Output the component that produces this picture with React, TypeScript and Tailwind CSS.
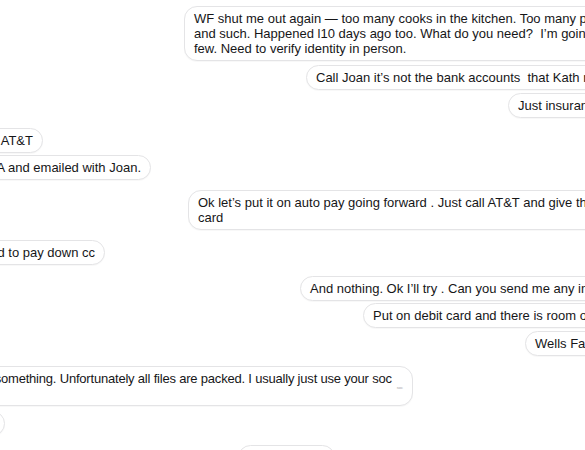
type Msg = {
  side: "in" | "out";
  lines: string[];
  mt: string;
  pos: string;
  tail?: boolean;
  tight?: boolean;
};

const messages: Msg[] = [
  {
    side: "out",
    mt: "mt-[6px]",
    pos: "ml-[184px]",
    lines: [
      "WF shut me out again \u2014 too many cooks in the kitchen. Too many profiles",
      "and such. Happened l10 days ago too. What do you need?\u00a0 I\u2019m going to go to a branch in a",
      "few. Need to verify identity in person.",
    ],
  },
  { side: "out", mt: "mt-[4px]", pos: "ml-[306px]", lines: ["Call Joan it\u2019s not the bank accounts\u00a0 that Kath needs"] },
  { side: "out", mt: "mt-[3px]", pos: "ml-[508px]", lines: ["Just insurance"] },
  { side: "in", mt: "mt-[10px]", pos: "w-[43px]", lines: ["Paid by\u00a0 AT&T"] },
  { side: "in", mt: "mt-[2px]", pos: "w-[151px]", lines: ["I called SSA and emailed with Joan."] },
  {
    side: "out",
    mt: "mt-[10px]",
    pos: "ml-[188px]",
    lines: ["Ok let\u2019s put it on auto pay going forward . Just call AT&T and give them the", "card"],
  },
  { side: "in", mt: "mt-[10px]", pos: "w-[105px]", lines: ["I need to pay down cc"] },
  { side: "out", mt: "mt-[11px]", pos: "ml-[300px]", lines: ["And nothing. Ok I\u2019ll try . Can you send me any info"] },
  { side: "out", mt: "mt-[2px]", pos: "ml-[363px]", lines: ["Put on debit card and there is room on it"] },
  { side: "out", mt: "mt-[3px]", pos: "ml-[525px]", lines: ["Wells Fargo"] },
  {
    side: "in",
    mt: "mt-[10px]",
    pos: "w-[413px]",
    tail: true,
    tight: true,
    lines: ["Send me something. Unfortunately all files are packed. I usually just use your soc", "\u00a0"],
  },
  { side: "in", mt: "mt-[5px]", pos: "w-[5px]", lines: ["Ok"] },
  { side: "out", mt: "mt-[9px]", pos: "ml-[238px]", lines: ["Sounds good"] },
];

function Bubble({ msg }: { msg: Msg }) {
  return (
    <div
      className={`shrink-0 whitespace-nowrap rounded-[13px] border border-[#e4e4e6] bg-white px-[9px] py-[4px] text-[13px] leading-[15px] text-[#161618] shadow-[0_1px_1px_rgba(0,0,0,0.03)] ${
        msg.tight ? "tracking-[-0.2px]" : ""
      }`}
    >
      {msg.lines.map((line, i) => (
        <div key={i}>
          {line}
          {msg.tail && i === 0 && (
            <span className="relative top-[6px] ml-[5px] inline-block text-[4px] leading-[4px] tracking-normal text-[#a0a0a4]">
              soc
            </span>
          )}
        </div>
      ))}
    </div>
  );
}

export default function App() {
  return (
    <div
      className="h-[450px] w-[585px] overflow-hidden bg-white"
      style={{ fontFamily: '"Liberation Sans", Arial, sans-serif' }}
    >
      <div className="flex flex-col">
        {messages.map((msg, i) =>
          msg.side === "out" ? (
            <div key={i} className={`flex ${msg.mt} ${msg.pos}`}>
              <Bubble msg={msg} />
            </div>
          ) : (
            <div key={i} className={`flex justify-end ${msg.mt} ${msg.pos}`}>
              <Bubble msg={msg} />
            </div>
          )
        )}
      </div>
    </div>
  );
}
